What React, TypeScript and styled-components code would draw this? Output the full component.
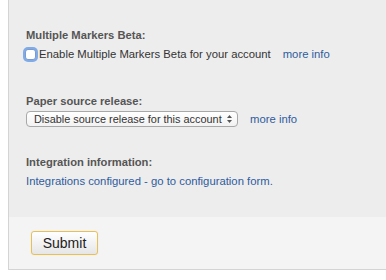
import React from 'react'
import styled, { createGlobalStyle } from 'styled-components'

const GlobalStyle = createGlobalStyle`
  html, body {
    margin: 0;
    padding: 0;
    background: #ffffff;
  }
  body {
    font-family: 'Liberation Sans', Arial, Helvetica, sans-serif;
  }
`

export default function App(): React.JSX.Element {
  return (
    <>
      <GlobalStyle />
      <Panel>
        <Settings>
          <Field $top={0} $gap={4}>
            <Label>Multiple Markers Beta:</Label>
            <Row>
              <CheckBox />
              <Text>Enable Multiple Markers Beta for your account</Text>
              <MoreLink href="#">more info</MoreLink>
            </Row>
          </Field>

          <Field $top={32} $gap={3}>
            <Label>Paper source release:</Label>
            <Row>
              <SelectBox>
                <span>Disable source release for this account</span>
                <svg width="7" height="10" viewBox="0 0 7 10">
                  <path d="M1 4 L3.5 1 L6 4 Z" fill="#555" />
                  <path d="M1 6 L3.5 9 L6 6 Z" fill="#555" />
                </svg>
              </SelectBox>
              <MoreLink href="#">more info</MoreLink>
            </Row>
          </Field>

          <Field $top={28} $gap={4}>
            <Label>Integration information:</Label>
            <Row>
              <Link href="#">Integrations configured - go to configuration form.</Link>
            </Row>
          </Field>
        </Settings>

        <Actions>
          <SubmitButton type="button">Submit</SubmitButton>
        </Actions>
      </Panel>
    </>
  )
}

const Panel = styled.div`
  margin-left: 8px;
  border-left: 1px solid #d4d4d4;
  border-bottom: 1px solid #d4d4d4;
`

const Settings = styled.div`
  display: flex;
  flex-direction: column;
  padding: 28px 0 28px 17px;
  background: #ededed;
`

const Field = styled.div<{ $top: number; $gap: number }>`
  display: flex;
  flex-direction: column;
  margin-top: ${(p) => p.$top}px;
  gap: ${(p) => p.$gap}px;
`

const Label = styled.div`
  font-size: 11.2px;
  line-height: 14px;
  font-weight: bold;
  color: #555555;
`

const Row = styled.div`
  display: flex;
  align-items: center;
  height: 16px;
`

const CheckBox = styled.span`
  box-sizing: border-box;
  width: 11px;
  height: 11px;
  margin-left: -1px;
  margin-right: 3px;
  border: 1px solid #7a9ad0;
  border-radius: 3px;
  background: #ffffff;
  box-shadow: 0 0 0 2px rgba(90, 150, 230, 0.75);
`

const Text = styled.span`
  font-size: 11.3px;
  color: #333333;
`

const Link = styled.a`
  font-size: 11.3px;
  color: #2f5c9e;
  text-decoration: none;
`

const MoreLink = styled(Link)`
  margin-left: 12px;
`

const SelectBox = styled.div`
  box-sizing: border-box;
  display: flex;
  align-items: center;
  justify-content: space-between;
  width: 212px;
  height: 16px;
  padding: 0 4px 0 7px;
  border: 1px solid #a8a8a8;
  border-radius: 4px;
  background: linear-gradient(#ffffff, #f2f2f2);
  font-size: 10.9px;
  color: #333333;
  white-space: nowrap;
`

const Actions = styled.div`
  display: flex;
  padding: 14px 0 14px 22px;
  background: #f4f4f4;
`

const SubmitButton = styled.button`
  box-sizing: border-box;
  width: 67px;
  height: 24px;
  padding: 0;
  border: 1px solid #e6c15a;
  border-radius: 3px;
  background: linear-gradient(#ffffff, #e6e6e6);
  box-shadow: 0 0 1px rgba(240, 200, 80, 0.6);
  font-family: 'Liberation Sans', Arial, Helvetica, sans-serif;
  font-size: 14px;
  color: #222222;
`
